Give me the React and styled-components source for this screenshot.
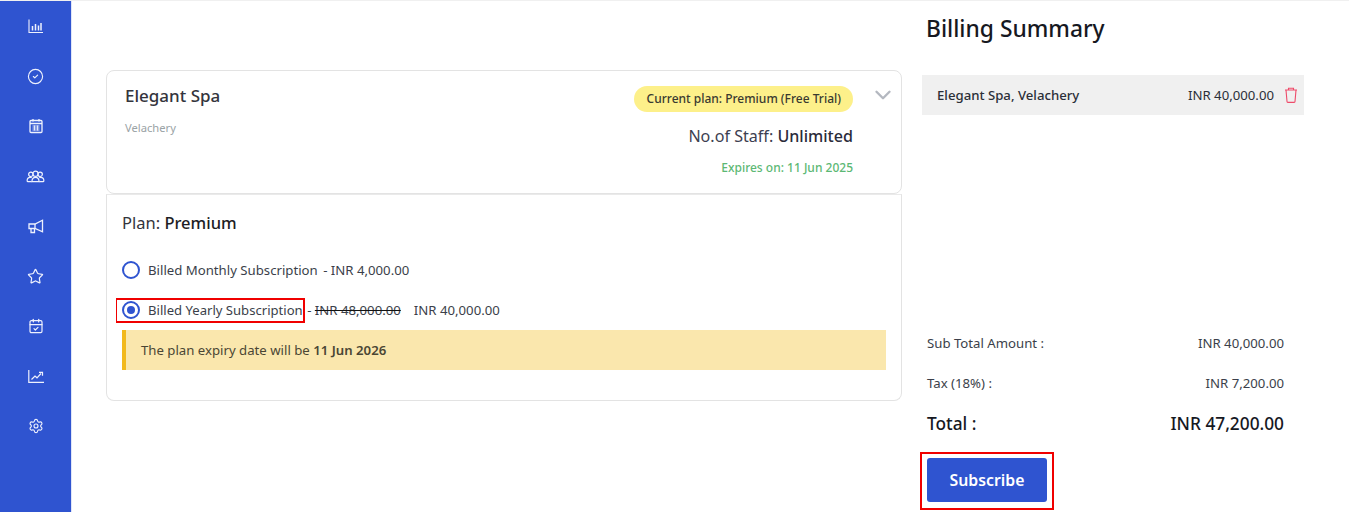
import React, { useState } from 'react';
import styled, { createGlobalStyle } from 'styled-components';
import { CircleCheck, Star, CalendarCheck, Settings, ChevronDown } from 'lucide-react';

const GlobalStyle = createGlobalStyle`
  html, body {
    margin: 0;
    padding: 0;
    background: #fff;
    font-family: "Noto Sans", "Open Sans", sans-serif;
    color: #2b2f38;
    overflow: hidden;
  }
  * { box-sizing: border-box; }
`;

const Page = styled.div`
  display: flex;
  height: 512px;
  width: 1349px;
  border-top: 1px solid #f0f0f0;
`;

const Sidebar = styled.nav`
  width: 72px;
  flex: none;
  background: #2f54d0;
  border-right: 1px solid #dfe5f8;
  display: flex;
  flex-direction: column;
`;

const NavItem = styled.div`
  height: 50px;
  display: flex;
  align-items: center;
  justify-content: center;
  color: #eef1fd;
`;

const Main = styled.main`
  flex: 1;
  display: flex;
  padding-left: 34px;
`;

const Left = styled.section`
  width: 796px;
  flex: none;
  padding-top: 69px;
`;

const Card = styled.div`
  height: 124px;
  border: 1px solid #e3e3e3;
  border-radius: 8px;
  padding: 15px 48px 0 18px;
  display: flex;
  justify-content: space-between;
  position: relative;
`;

const SpaName = styled.div`
  font-size: 17px;
  font-weight: 500;
  line-height: 24px;
  margin-top: -2px;
  color: #34343c;
`;

const SpaArea = styled.div`
  font-size: 11.2px;
  line-height: 15px;
  color: #9aa3a6;
  margin-top: 12px;
`;

const PlanInfo = styled.div`
  display: flex;
  flex-direction: column;
  align-items: flex-end;
`;

const Badge = styled.div`
  height: 26px;
  border-radius: 13px;
  background: #fdf08a;
  padding: 0 12px 0 12.5px;
  font-size: 12px;
  font-weight: 500;
  line-height: 26px;
  color: #3a3a30;
`;

const Staff = styled.div`
  font-size: 16.1px;
  line-height: 22px;
  margin-top: 13px;
  color: #3c4050;
  b { font-weight: 500; color: #2b2b3a; }
`;

const Expires = styled.div`
  font-size: 12px;
  font-weight: 500;
  line-height: 16px;
  margin-top: 13px;
  color: #5cb874;
`;

const Toggle = styled.div`
  position: absolute;
  top: 11px;
  right: 5px;
  display: flex;
  color: #b4b8c0;
`;

const PlanPanel = styled.div`
  height: 207px;
  border: 1px solid #e3e3e3;
  border-top-color: #eaeaea;
  border-radius: 0 0 8px 8px;
  padding: 16px 15px 0 15px;
`;

const PlanTitle = styled.div`
  font-size: 16.5px;
  line-height: 24px;
  color: #33343c;
  margin-bottom: 15px;
  b { font-weight: 500; color: #1d1d24; }
`;

const OptionRow = styled.div`
  display: flex;
  align-items: center;
  height: 40px;
  font-size: 13.2px;
  color: #3b3f4a;
  white-space: pre;
`;

const OptionLabel = styled.label`
  display: flex;
  align-items: center;
  gap: 8px;
  height: 25px;
  margin-left: ${p => (p.$marked ? '-6px' : '0')};
  margin-right: ${p => (p.$marked ? '-1px' : '2px')};
  padding-left: ${p => (p.$marked ? '5px' : '0')};
  font-size: ${p => (p.$marked ? '13.1px' : 'inherit')};
  border: ${p => (p.$marked ? '2px solid #f00000' : 'none')};
  border-left-width: ${p => (p.$marked ? '1px' : '0')};
`;

const Radio = styled.span`
  width: 18px;
  height: 18px;
  border-radius: 50%;
  border: 2px solid #2f54d0;
  display: flex;
  align-items: center;
  justify-content: center;
  &::after {
    content: '';
    width: 8px;
    height: 8px;
    border-radius: 50%;
    background: ${p => (p.$on ? '#2f54d0' : 'transparent')};
  }
`;

const Struck = styled.s`
  margin-right: 13px;
  color: #3b3f4a;
  text-decoration-color: #111;
`;

const Notice = styled.div`
  height: 40px;
  background: #fae7ad;
  border-left: 4px solid #f2b91c;
  padding-left: 15px;
  font-size: 13.2px;
  line-height: 40px;
  color: #4a4634;
  b { font-weight: 600; }
`;

const Right = styled.aside`
  width: 382px;
  flex: none;
  margin-left: 20px;
  display: flex;
  flex-direction: column;
`;

const Heading = styled.h2`
  margin: 11px 0 0 4px;
  font-size: 22.8px;
  font-weight: 500;
  line-height: 34px;
  color: #16181f;
`;

const CartItem = styled.div`
  margin-top: 29px;
  height: 40px;
  background: #f0f0f0;
  display: flex;
  align-items: center;
  padding: 0 6px 0 15px;
  font-size: 13.2px;
  color: #2b2f38;
`;

const CartName = styled.span`
  font-weight: 500;
  flex: 1;
`;

const Trash = styled.svg`
  margin-left: 10px;
  color: #ee4b6a;
`;

const Totals = styled.div`
  margin-top: 208px;
  padding: 0 20px 0 5px;
`;

const TotalRow = styled.div`
  display: flex;
  justify-content: space-between;
  align-items: center;
  height: 40px;
  font-size: 13.2px;
  color: #3b3f4a;
`;

const GrandRow = styled(TotalRow)`
  font-size: 17.3px;
  font-weight: 500;
  color: #16181f;
`;

const SubscribeFrame = styled.div`
  align-self: flex-start;
  margin: 9px 0 0 -2px;
  border: 2px solid #f00000;
  padding: 4px 5px 6px;
`;

const SubscribeButton = styled.button`
  display: block;
  width: 120px;
  height: 44px;
  border: none;
  border-radius: 3px;
  background: #2f54d0;
  color: #fff;
  font-family: inherit;
  font-size: 15.8px;
  font-weight: 600;
  cursor: pointer;
`;

const BarsIcon = () => (
  <svg width="16" height="16" viewBox="0 0 16 16" fill="none" stroke="currentColor" strokeWidth="1.1">
    <path d="M1 1.5v13h14" />
    <path d="M4.5 12.5V8M7.5 12.5V6M10.5 12.5V7.5M13 12.5V5" strokeWidth="1.5" />
  </svg>
);

const CalendarIcon = () => (
  <svg width="14" height="16" viewBox="0 0 14 16" fill="none" stroke="currentColor" strokeWidth="1.3">
    <rect x="1" y="2.5" width="12" height="12" rx="1" />
    <path d="M1 5.5h12M4 1v2.5M10 1v2.5" />
    <path d="M3.5 8h7M3.5 10h7M3.5 12h7M5.5 7.5v5M8.5 7.5v5" strokeWidth="0.9" />
  </svg>
);

const TeamIcon = () => (
  <svg width="19" height="13" viewBox="0 0 20 14" fill="none" stroke="currentColor" strokeWidth="1.3">
    <circle cx="10" cy="4" r="2.8" />
    <circle cx="5" cy="4.6" r="2.4" />
    <circle cx="15" cy="4.6" r="2.4" />
    <path d="M6.2 12.5c0-3 1.6-4.5 3.8-4.5s3.8 1.5 3.8 4.5z" />
    <path d="M6 8.4c-.6-.3-1-.4-1.6-.4C2.5 8 1 9.5 1 11.5c0 .6.5 1 1 1h4M14 8.4c.6-.3 1-.4 1.6-.4 1.9 0 3.4 1.5 3.4 3.5 0 .6-.5 1-1 1h-4" />
  </svg>
);

const HornIcon = () => (
  <svg width="16" height="15" viewBox="0 0 16 15" fill="none" stroke="currentColor" strokeWidth="1.3">
    <path d="M1 5h6l7.5-3.8v11.6L7 9.5H1z" />
    <path d="M7 5v4.5M3 9.5v4h3.5V9.5" />
  </svg>
);

const GrowthIcon = () => (
  <svg width="16" height="13" viewBox="0 0 16 13" fill="none" stroke="currentColor" strokeWidth="1.2">
    <path d="M.8 0v12.3H16" />
    <path d="M3.5 9.5L7 6l2 1.8 4-4.3" />
    <path d="M11 2.3h3.5v3.5" />
  </svg>
);

const TrashIcon = () => (
  <Trash width="14" height="16" viewBox="0 0 14 16" fill="none" stroke="currentColor" strokeWidth="1.1">
    <path d="M1 3h12M2 3l1 11.5c0 .5.4.9.9.9h6.2c.5 0 .9-.4.9-.9L12 3" />
    <path d="M4.5 3V1.2h5V3" />
  </Trash>
);

const navIcons = [
  <BarsIcon />,
  <CircleCheck size={17} strokeWidth={1.6} />,
  <CalendarIcon />,
  <TeamIcon />,
  <HornIcon />,
  <Star size={17} strokeWidth={1.7} />,
  <CalendarCheck size={16} strokeWidth={1.8} />,
  <GrowthIcon />,
  <Settings size={16} strokeWidth={1.7} />,
];

export default function App() {
  const [yearly, setYearly] = useState(true);

  return (
    <>
      <GlobalStyle />
      <Page>
        <Sidebar>
          {navIcons.map((icon, i) => (
            <NavItem key={i}>{icon}</NavItem>
          ))}
        </Sidebar>
        <Main>
          <Left>
            <Card>
              <div>
                <SpaName>Elegant Spa</SpaName>
                <SpaArea>Velachery</SpaArea>
              </div>
              <PlanInfo>
                <Badge>Current plan: Premium (Free Trial)</Badge>
                <Staff>No.of Staff: <b>Unlimited</b></Staff>
                <Expires>Expires on: 11 Jun 2025</Expires>
              </PlanInfo>
              <Toggle><ChevronDown size={26} strokeWidth={2.2} /></Toggle>
            </Card>
            <PlanPanel>
              <PlanTitle>Plan: <b>Premium</b></PlanTitle>
              <OptionRow onClick={() => setYearly(false)}>
                <OptionLabel>
                  <Radio $on={!yearly} />
                  Billed Monthly Subscription
                </OptionLabel>
                {' - INR 4,000.00'}
              </OptionRow>
              <OptionRow onClick={() => setYearly(true)}>
                <OptionLabel $marked>
                  <Radio $on={yearly} />
                  Billed Yearly Subscription
                </OptionLabel>
                {' - '}
                <Struck>INR 48,000.00</Struck>
                INR 40,000.00
              </OptionRow>
              <Notice>The plan expiry date will be <b>11 Jun 2026</b></Notice>
            </PlanPanel>
          </Left>
          <Right>
            <Heading>Billing Summary</Heading>
            <CartItem>
              <CartName>Elegant Spa, Velachery</CartName>
              INR 40,000.00
              <TrashIcon />
            </CartItem>
            <Totals>
              <TotalRow><span>Sub Total Amount :</span><span>INR 40,000.00</span></TotalRow>
              <TotalRow><span>Tax (18%) :</span><span>INR 7,200.00</span></TotalRow>
              <GrandRow><span>Total :</span><span>INR 47,200.00</span></GrandRow>
            </Totals>
            <SubscribeFrame>
              <SubscribeButton>Subscribe</SubscribeButton>
            </SubscribeFrame>
          </Right>
        </Main>
      </Page>
    </>
  );
}
